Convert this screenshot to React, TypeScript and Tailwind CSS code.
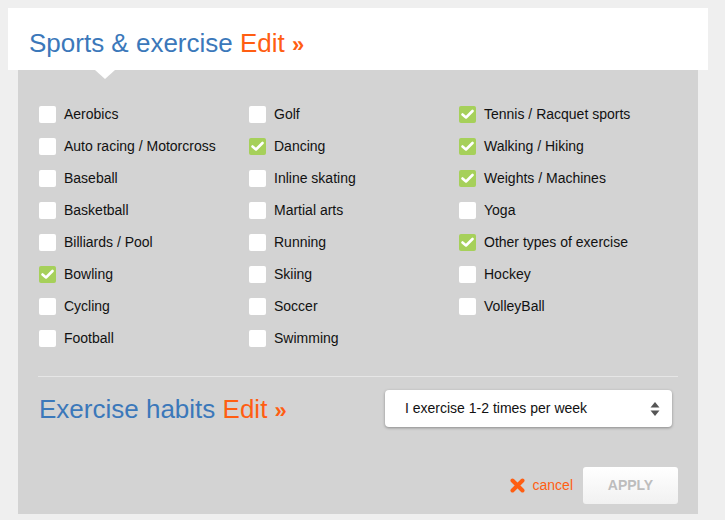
import React from 'react'

const columns: { label: string; checked?: boolean }[][] = [
    [
        { label: 'Aerobics' },
        { label: 'Auto racing / Motorcross' },
        { label: 'Baseball' },
        { label: 'Basketball' },
        { label: 'Billiards / Pool' },
        { label: 'Bowling', checked: true },
        { label: 'Cycling' },
        { label: 'Football' },
    ],
    [
        { label: 'Golf' },
        { label: 'Dancing', checked: true },
        { label: 'Inline skating' },
        { label: 'Martial arts' },
        { label: 'Running' },
        { label: 'Skiing' },
        { label: 'Soccer' },
        { label: 'Swimming' },
    ],
    [
        { label: 'Tennis / Racquet sports', checked: true },
        { label: 'Walking / Hiking', checked: true },
        { label: 'Weights / Machines', checked: true },
        { label: 'Yoga' },
        { label: 'Other types of exercise', checked: true },
        { label: 'Hockey' },
        { label: 'VolleyBall' },
    ],
]

function Check({ label, checked }: { label: string; checked?: boolean }) {
    return (
        <label className="flex h-8 items-center gap-2">
            <span
                className={
                    checked
                        ? 'flex h-[17px] w-[17px] items-center justify-center rounded-[2px] bg-[#a6d05a]'
                        : 'h-[17px] w-[17px] rounded-[2px] bg-white'
                }
            >
                {checked && (
                    <svg width="13" height="11" viewBox="0 0 13 11">
                        <path d="M1.5 5.5 L5 8.5 L11.5 2" fill="none" stroke="white" strokeWidth="2.6" strokeLinecap="round" strokeLinejoin="round" />
                    </svg>
                )}
            </span>
            <span className="text-[14px] text-[#111]">{label}</span>
        </label>
    )
}

function Title({ text }: { text: string }) {
    return (
        <h2 className="text-[26px] leading-none">
            <span className="text-[#3b78ba]">{text}</span>{' '}
            <span className="text-[#ff5e12]">Edit <span className="text-[22px] font-bold">»</span></span>
        </h2>
    )
}

export default function App() {
    return (
        <div className="min-h-[520px] w-[725px] bg-[#efefef] pt-2 font-['Liberation_Sans',Arial,sans-serif]">
            <div className="ml-2 flex h-[62px] w-[700px] items-center bg-white pl-[21px] pt-[8px]">
                <Title text="Sports & exercise" />
            </div>
            <div className="relative ml-[18px] w-[680px] bg-[#d3d3d3] px-5 pb-[10px] pt-[28px]">
                <div className="absolute left-[77px] top-0 h-0 w-0 border-x-[10px] border-t-[9px] border-x-transparent border-t-white" />
                <div className="grid grid-cols-[210px_210px_1fr] pl-px">
                    {columns.map((col, i) => (
                        <div key={i} className="flex flex-col">
                            {col.map((c) => (
                                <Check key={c.label} label={c.label} checked={c.checked} />
                            ))}
                        </div>
                    ))}
                </div>
                <div className="mt-[22px] h-px bg-[#e6e6e6]" />
                <div className="mt-[13px] flex items-center justify-between pl-px pr-[6px]">
                    <Title text="Exercise habits" />
                    <div className="flex h-[37px] w-[287px] items-center justify-between rounded-[4px] bg-white pl-5 pr-3 shadow-[0_1px_3px_rgba(0,0,0,0.35)]">
                        <span className="text-[14px] text-[#111]">I exercise 1-2 times per week</span>
                        <svg width="10" height="16" viewBox="0 0 10 16">
                            <path d="M5 1 L9.5 6.5 H0.5 Z" fill="#555" />
                            <path d="M5 15 L9.5 9.5 H0.5 Z" fill="#555" />
                        </svg>
                    </div>
                </div>
                <div className="mt-[40px] flex items-center justify-end">
                    <button className="mr-[10px] flex items-center gap-2 text-[14px] text-[#ff5e12]">
                        <svg width="15" height="15" viewBox="0 0 15 15">
                            <path d="M2.5 2.5 L12.5 12.5 M12.5 2.5 L2.5 12.5" stroke="#ff5e12" strokeWidth="4" strokeLinecap="round" />
                        </svg>
                        cancel
                    </button>
                    <button className="h-[37px] w-[95px] rounded-[3px] bg-gradient-to-b from-white to-[#f1f1f1] text-[14px] font-bold text-[#bdbdbd]">
                        APPLY
                    </button>
                </div>
            </div>
        </div>
    )
}
